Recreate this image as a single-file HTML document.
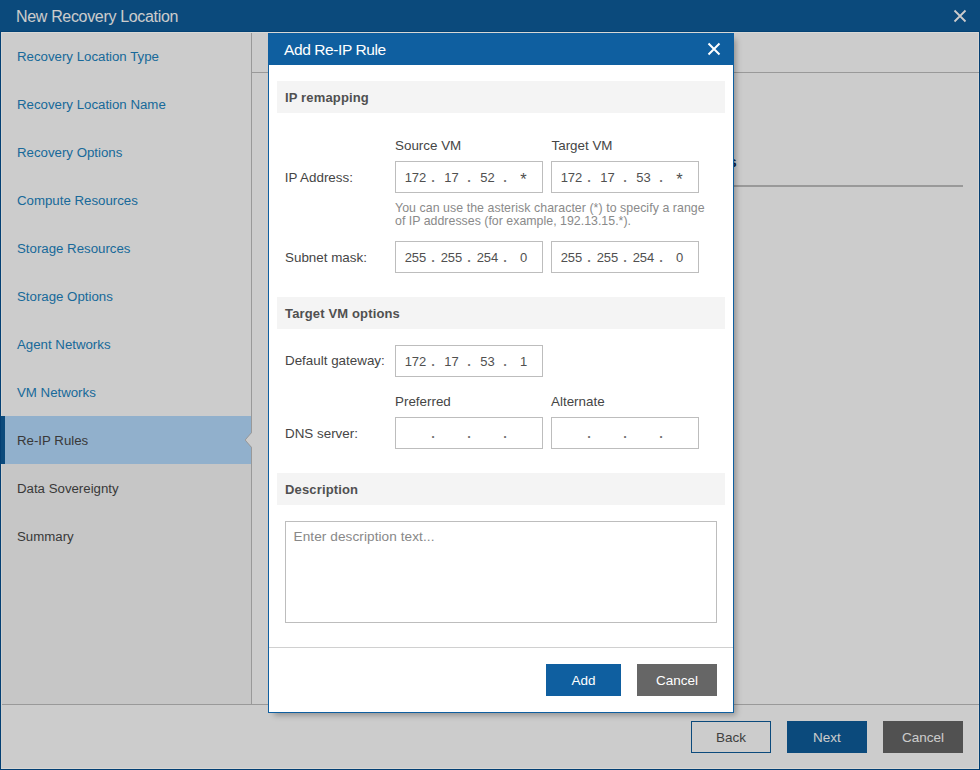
<!DOCTYPE html>
<html><head><meta charset="utf-8">
<style>
*{box-sizing:border-box;margin:0;padding:0}
html,body{width:980px;height:770px;overflow:hidden;background:#fff}
body{font-family:"Liberation Sans",sans-serif;position:relative}
.a{position:absolute;white-space:nowrap;line-height:1}
#title{left:0;top:0;width:980px;height:32px;background:#0e5d9c}
#nav{left:1px;top:32px;width:250px;height:672px;background:#fff}
#navfut{left:1px;top:464px;width:250px;height:240px;background:#f8f8f8}
.nv{font-size:13.25px;color:#2184c1;left:17px}
.nvd{color:#484848}
#sel{left:1px;top:416px;width:250px;height:48px;background:#b6dcff}
#selbar{left:0;top:416px;width:5px;height:48px;background:#0e5d9c}
#vdiv{left:251px;top:32px;width:1px;height:672px;background:#c0c0c0}
#hline{left:252px;top:72px;width:727px;height:1px;background:#c0c0c0}
#tabline{left:270px;top:185px;width:693px;height:2px;background:#c0c0c0}
#fline{left:1px;top:704px;width:978px;height:1px;background:#c0c0c0}
#bl{left:0;top:32px;width:1px;height:738px;background:#0e5d9c}
#br{left:979px;top:32px;width:1px;height:738px;background:#0e5d9c}
#bb{left:0;top:769px;width:980px;height:1px;background:#0e5d9c}
.btn{position:absolute;height:32px;width:80px;font-size:13.5px;text-align:center;line-height:1;padding-top:9.5px}
#overlay{left:0;top:0;width:980px;height:770px;background:rgba(0,0,0,.2)}
#modal{left:268px;top:33px;width:466px;height:680px;background:#fff;border:1px solid #0f5fa0;box-shadow:4px 4px 6px -2px rgba(0,0,0,.3)}
#mhead{left:0;top:0;width:464px;height:32px;background:#0f5fa0;margin:-1px 0 0 0}
.sec{position:absolute;left:8px;width:448px;height:32px;background:#f4f4f4}
.sech{font-size:13px;font-weight:700;color:#505050;letter-spacing:0.15px;left:17px}
.lbl{font-size:13.4px;color:#454545;margin-top:-0.35px}
.inp{position:absolute;width:148px;height:32px;border:1px solid #bdbdbd;background:#fff}
.oc{position:absolute;top:9px;width:36px;text-align:center;font-size:13px;color:#505050;line-height:13px}
.dt{position:absolute;top:9px;width:6px;text-align:center;font-size:13px;font-weight:700;color:#707070;line-height:13px}
.help{font-size:12.35px;color:#8a8a8a;left:126px}
</style></head><body>
<!-- underlying page -->
<div class="a" id="title"></div>
<div class="a" style="left:16px;top:9px;font-size:16px;letter-spacing:-0.33px;color:#fff">New Recovery Location</div>
<svg class="a" style="left:953px;top:9px" width="14" height="14" viewBox="0 0 14 14"><path d="M1.5 1.5L12.5 12.5M12.5 1.5L1.5 12.5" stroke="#fff" stroke-width="1.8"/></svg>
<div class="a" id="nav"></div>
<div class="a" id="navfut"></div>
<div class="a" id="sel"></div>
<div class="a" id="selbar"></div>
<div class="a nv" style="top:50px">Recovery Location Type</div>
<div class="a nv" style="top:98px">Recovery Location Name</div>
<div class="a nv" style="top:146px">Recovery Options</div>
<div class="a nv" style="top:194px">Compute Resources</div>
<div class="a nv" style="top:242px">Storage Resources</div>
<div class="a nv" style="top:290px">Storage Options</div>
<div class="a nv" style="top:338px">Agent Networks</div>
<div class="a nv" style="top:386px">VM Networks</div>
<div class="a nv nvd" style="top:434px">Re-IP Rules</div>
<div class="a nv nvd" style="top:482px">Data Sovereignty</div>
<div class="a nv nvd" style="top:530px">Summary</div>
<div class="a" id="vdiv"></div>
<svg class="a" style="left:244px;top:432px" width="9" height="16" viewBox="0 0 9 16"><path d="M8 0.5L1.2 8L8 15.5L9 15.5L9 0.5Z" fill="#fff"/><path d="M7.5 0.5L1.2 8L7.5 15.5" fill="none" stroke="#c0c0c0" stroke-width="1"/></svg>
<div class="a" id="hline"></div>
<div class="a" style="left:698.5px;top:154.5px;font-size:14px;font-weight:700;color:#0c2a50">Rules</div>
<div class="a" id="tabline"></div>
<div class="a" id="fline"></div>
<div class="btn" style="left:691px;top:721px;border:1px solid #0e5d9c;background:#fff;color:#505050;padding-top:8.5px">Back</div>
<div class="btn" style="left:787px;top:721px;background:#0e5d9c;color:#fff">Next</div>
<div class="btn" style="left:883px;top:721px;background:#666;color:#fff">Cancel</div>
<div class="a" id="bl"></div><div class="a" id="br"></div><div class="a" id="bb"></div>
<div class="a" id="overlay"></div>
<div class="a" style="left:1px;top:32px;width:978px;height:1px;background:#d9d9d7"></div><div class="a" style="left:1px;top:32px;width:1px;height:384px;background:#d4d4d2"></div><div class="a" style="left:1px;top:464px;width:1px;height:305px;background:#d0d0ce"></div><div class="a" style="left:0;top:31px;width:980px;height:1px;background:#044274"></div><div class="a" style="left:978px;top:32px;width:1px;height:737px;background:#d6d6d4"></div><div class="a" style="left:978px;top:72px;width:1px;height:1px;background:#9a9a9a"></div><div class="a" style="left:978px;top:704px;width:1px;height:1px;background:#9a9a9a"></div><div class="a" style="left:1px;top:768px;width:978px;height:1px;background:#d9d7d4"></div><div class="a" style="left:0;top:32px;width:1px;height:738px;background:#033f73"></div><div class="a" style="left:979px;top:32px;width:1px;height:738px;background:#033f73"></div><div class="a" style="left:0;top:769px;width:980px;height:1px;background:#033f73"></div>

<!-- modal -->
<div class="a" id="modal">
  <div class="a" style="left:-1px;top:-1px;width:466px;height:32px;background:#0f5fa0"></div>
  <div class="a" style="left:15px;top:8.2px;font-size:15.5px;letter-spacing:-0.4px;color:#fff">Add Re-IP Rule</div>
  <svg class="a" style="left:438px;top:8px" width="14" height="14" viewBox="0 0 14 14"><path d="M1.5 1.5L12.5 12.5M12.5 1.5L1.5 12.5" stroke="#fff" stroke-width="2"/></svg>

  <div class="sec" style="top:47px"><div class="a sech" style="left:8px;top:10px">IP remapping</div></div>
  <div class="a lbl" style="left:126px;top:105px">Source VM</div>
  <div class="a lbl" style="left:282.5px;top:105px">Target VM</div>
  <div class="a lbl" style="left:15.7px;top:137px">IP Address:</div>
  <div class="inp" style="left:126px;top:127px">
    <div class="oc" style="left:1.5px">172</div><div class="dt" style="left:34px">.</div>
    <div class="oc" style="left:37.5px">17</div><div class="dt" style="left:70px">.</div>
    <div class="oc" style="left:73.5px">52</div><div class="dt" style="left:106px">.</div>
    <div class="oc" style="left:109.5px;top:11.4px;font-size:16.5px">*</div>
  </div>
  <div class="inp" style="left:282px;top:127px">
    <div class="oc" style="left:1.5px">172</div><div class="dt" style="left:34px">.</div>
    <div class="oc" style="left:37.5px">17</div><div class="dt" style="left:70px">.</div>
    <div class="oc" style="left:73.5px">53</div><div class="dt" style="left:106px">.</div>
    <div class="oc" style="left:109.5px;top:11.4px;font-size:16.5px">*</div>
  </div>
  <div class="a help" style="top:167.5px;letter-spacing:0.06px">You can use the asterisk character (*) to specify a range</div>
  <div class="a help" style="top:181px;letter-spacing:0.02px">of IP addresses (for example, 192.13.15.*).</div>
  <div class="a lbl" style="left:16px;top:217px">Subnet mask:</div>
  <div class="inp" style="left:126px;top:207px">
    <div class="oc" style="left:1.5px">255</div><div class="dt" style="left:34px">.</div>
    <div class="oc" style="left:37.5px">255</div><div class="dt" style="left:70px">.</div>
    <div class="oc" style="left:73.5px">254</div><div class="dt" style="left:106px">.</div>
    <div class="oc" style="left:109.5px">0</div>
  </div>
  <div class="inp" style="left:282px;top:207px">
    <div class="oc" style="left:1.5px">255</div><div class="dt" style="left:34px">.</div>
    <div class="oc" style="left:37.5px">255</div><div class="dt" style="left:70px">.</div>
    <div class="oc" style="left:73.5px">254</div><div class="dt" style="left:106px">.</div>
    <div class="oc" style="left:109.5px">0</div>
  </div>

  <div class="sec" style="top:263px"><div class="a sech" style="left:8px;top:10px">Target VM options</div></div>
  <div class="a lbl" style="left:16px;top:320.5px">Default gateway:</div>
  <div class="inp" style="left:126px;top:311px">
    <div class="oc" style="left:1.5px">172</div><div class="dt" style="left:34px">.</div>
    <div class="oc" style="left:37.5px">17</div><div class="dt" style="left:70px">.</div>
    <div class="oc" style="left:73.5px">53</div><div class="dt" style="left:106px">.</div>
    <div class="oc" style="left:109.5px">1</div>
  </div>
  <div class="a lbl" style="left:126px;top:361.5px">Preferred</div>
  <div class="a lbl" style="left:282px;top:361.5px">Alternate</div>
  <div class="a lbl" style="left:16px;top:393.4px">DNS server:</div>
  <div class="inp" style="left:126px;top:383px">
    <div class="dt" style="left:34px">.</div><div class="dt" style="left:70px">.</div><div class="dt" style="left:106px">.</div>
  </div>
  <div class="inp" style="left:282px;top:383px">
    <div class="dt" style="left:34px">.</div><div class="dt" style="left:70px">.</div><div class="dt" style="left:106px">.</div>
  </div>

  <div class="sec" style="top:439px"><div class="a sech" style="left:8px;top:10px">Description</div></div>
  <div class="a" style="left:16px;top:487px;width:432px;height:102px;border:1px solid #bdbdbd"></div>
  <div class="a" style="left:24.5px;top:496px;font-size:13.6px;letter-spacing:0.08px;color:#888">Enter description text...</div>

  <div class="a" style="left:0;top:613px;width:464px;height:1px;background:#d0d0d0"></div>
  <div class="btn" style="left:277px;top:630px;width:75px;background:#0f5fa0;color:#fff">Add</div>
  <div class="btn" style="left:368px;top:630px;background:#666;color:#fff">Cancel</div>
</div>
</body></html>
